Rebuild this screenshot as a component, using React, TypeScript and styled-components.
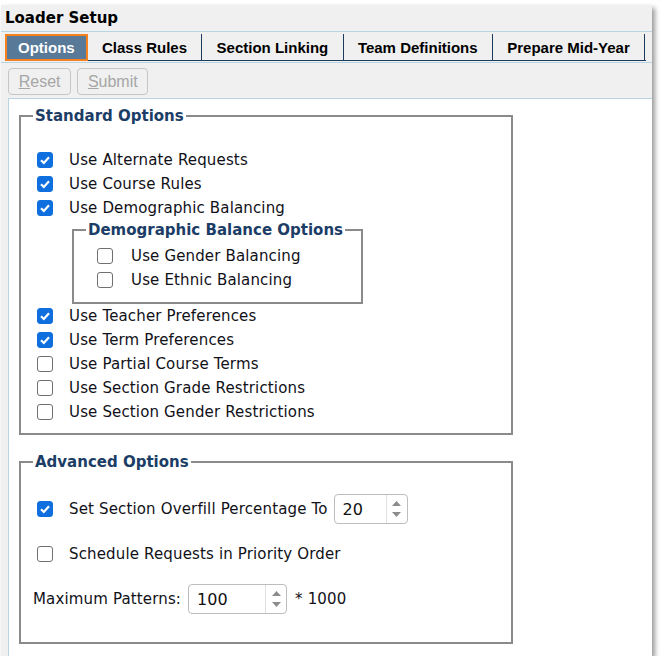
import styled, { createGlobalStyle } from "styled-components";

const GlobalStyle = createGlobalStyle`
  body {
    margin: 0;
    background: #ffffff;
    font-family: "DejaVu Sans", Verdana, sans-serif;
  }
`;

const Window = styled.div`
  margin: 5px 0 0 1px;
  width: 651px;
  height: 651px;
  display: flex;
  flex-direction: column;
  background: #f0f0f0;
  box-shadow: 3px 3px 5px rgba(0, 0, 0, 0.4);
`;

const Title = styled.div`
  height: 26px;
  line-height: 26px;
  padding-left: 4px;
  font-weight: bold;
  font-size: 15px;
  color: #000;
`;

const TabBar = styled.div`
  border-top: 1px solid #b9d5e2;
  border-bottom: 1px solid #b9d5e2;
  padding: 2px 6px 1px 4px;
`;

const Tabs = styled.div`
  display: flex;
  width: 641px;
  height: 27px;
  border-bottom: 1px solid #1d3a5f;
  box-sizing: border-box;
`;

const Tab = styled.div<{ $active?: boolean }>`
  display: flex;
  align-items: center;
  flex-shrink: 0;
  white-space: nowrap;
  font-family: "Liberation Sans", Arial, sans-serif;
  font-weight: bold;
  font-size: 15px;
  color: ${(p) => (p.$active ? "#ffffff" : "#000000")};
  background: ${(p) => (p.$active ? "#587a98" : "transparent")};
  border: ${(p) => (p.$active ? "2px solid #f5821f" : "none")};
  border-right: ${(p) => (p.$active ? "2px solid #f5821f" : "1px solid #1d3a5f")};
  height: ${(p) => (p.$active ? "27px" : "26px")};
  box-sizing: border-box;
  padding: ${(p) => (p.$active ? "0 11px" : "0 14.3px")};
`;

const Toolbar = styled.div`
  display: flex;
  gap: 6px;
  height: 35px;
  padding: 5px 0 0 7px;
  box-sizing: border-box;
`;

const Button = styled.button`
  height: 27px;
  padding: 0 9.7px;
  border: 1px solid #c6c6c6;
  border-radius: 4px;
  background: #f0f0f0;
  color: #a6a6a6;
  font-family: "Liberation Sans", Arial, sans-serif;
  font-size: 16px;
`;

const Panel = styled.div`
  flex: 1;
  margin-left: 7px;
  background: #ffffff;
  border-top: 1px solid #b9d5e2;
  border-left: 1px solid #b9d5e2;
  padding: 7px 0 0 10px;
`;

const Group = styled.fieldset<{ $top?: number; $pad: [number, number] }>`
  width: 474px;
  margin: 0;
  margin-top: ${(p) => p.$top ?? 0}px;
  padding: ${(p) => `${p.$pad[0]}px 0 ${p.$pad[1]}px 16px`};
  border: 2px solid #8a8a8a;
`;

const SubGroup = styled.fieldset`
  width: 264px;
  margin: 0 0 0 35px;
  padding: 4px 0 10px 23px;
  border: 2px solid #8a8a8a;
`;

const Legend = styled.legend<{ $shift: number }>`
  margin-left: ${(p) => p.$shift}px;
  padding: 0 2px;
  line-height: 20px;
  font-weight: bold;
  font-size: 15px;
  color: #1c3d66;
`;

const Row = styled.div<{ $h?: number }>`
  display: flex;
  align-items: center;
  height: ${(p) => p.$h ?? 24}px;
  font-size: 15px;
  letter-spacing: 0.15px;
  color: #111118;
`;

const Stack = styled.div`
  display: flex;
  flex-direction: column;
  gap: 18px;
`;

const Box = styled.span<{ $checked?: boolean }>`
  display: inline-flex;
  align-items: center;
  justify-content: center;
  flex-shrink: 0;
  width: 16px;
  height: 16px;
  box-sizing: border-box;
  border-radius: 3px;
  border: 1px solid ${(p) => (p.$checked ? "#0f6fde" : "#707070")};
  background: ${(p) => (p.$checked ? "#0f6fde" : "#ffffff")};
`;

const Label = styled.span<{ $gap?: number }>`
  margin-left: ${(p) => p.$gap ?? 16}px;
`;

const Spin = styled.div<{ $w: number; $gap: number }>`
  display: flex;
  width: ${(p) => p.$w}px;
  height: 30px;
  margin-left: ${(p) => p.$gap}px;
  box-sizing: border-box;
  border: 1px solid #bdbdbd;
  border-radius: 4px;
  background: #fff;
`;

const SpinValue = styled.div`
  flex: 1;
  display: flex;
  align-items: center;
  padding-left: 8px;
  font-size: 16px;
  letter-spacing: 0;
  color: #111;
`;

const SpinArrows = styled.div`
  width: 20px;
  border-left: 1px solid #e0e0e0;
  display: flex;
  flex-direction: column;
  align-items: center;
  justify-content: center;
  gap: 6px;
`;

const Suffix = styled.span`
  margin-left: 8px;
`;

const Check = ({ checked }: { checked?: boolean }) => (
  <Box $checked={checked}>
    {checked && (
      <svg width="12" height="12" viewBox="0 0 12 12">
        <path d="M2 6.3 L4.8 9 L10 3.2" fill="none" stroke="#fff" strokeWidth="2.2" />
      </svg>
    )}
  </Box>
);

const SpinBox = ({ value, w, gap }: { value: string; w: number; gap: number }) => (
  <Spin $w={w} $gap={gap}>
    <SpinValue>{value}</SpinValue>
    <SpinArrows>
      <svg width="9" height="5" viewBox="0 0 9 5">
        <path d="M0 5 L4.5 0 L9 5 Z" fill="#8c8c8c" />
      </svg>
      <svg width="9" height="5" viewBox="0 0 9 5">
        <path d="M0 0 L4.5 5 L9 0 Z" fill="#8c8c8c" />
      </svg>
    </SpinArrows>
  </Spin>
);

const Option = ({ text, checked, gap }: { text: string; checked?: boolean; gap?: number }) => (
  <Row>
    <Check checked={checked} />
    <Label $gap={gap}>{text}</Label>
  </Row>
);

const App = () => (
  <>
    <GlobalStyle />
    <Window>
      <Title>Loader Setup</Title>
      <TabBar>
        <Tabs>
          <Tab $active>Options</Tab>
          <Tab>Class Rules</Tab>
          <Tab>Section Linking</Tab>
          <Tab>Team Definitions</Tab>
          <Tab>Prepare Mid-Year</Tab>
        </Tabs>
      </TabBar>
      <Toolbar>
        <Button disabled>
          <u>R</u>eset
        </Button>
        <Button disabled>
          <u>S</u>ubmit
        </Button>
      </Toolbar>
      <Panel>
        <Group $pad={[22, 9]}>
          <Legend $shift={-4}>Standard Options</Legend>
          <Option text="Use Alternate Requests" checked />
          <Option text="Use Course Rules" checked />
          <Option text="Use Demographic Balancing" checked />
          <SubGroup>
            <Legend $shift={-11}>Demographic Balance Options</Legend>
            <Option text="Use Gender Balancing" gap={18} />
            <Option text="Use Ethnic Balancing" gap={18} />
          </SubGroup>
          <Option text="Use Teacher Preferences" checked />
          <Option text="Use Term Preferences" checked />
          <Option text="Use Partial Course Terms" />
          <Option text="Use Section Grade Restrictions" />
          <Option text="Use Section Gender Restrictions" />
        </Group>
        <Group $top={17} $pad={[22, 28]}>
          <Legend $shift={-4}>Advanced Options</Legend>
          <Stack>
            <Row $h={30}>
              <Check checked />
              <Label>Set Section Overfill Percentage To</Label>
              <SpinBox value="20" w={74} gap={6} />
            </Row>
            <Option text="Schedule Requests in Priority Order" />
            <Row $h={30}>
              <Label $gap={-4}>Maximum Patterns:</Label>
              <SpinBox value="100" w={99} gap={7} />
              <Suffix>* 1000</Suffix>
            </Row>
          </Stack>
        </Group>
      </Panel>
    </Window>
  </>
);

export default App;
